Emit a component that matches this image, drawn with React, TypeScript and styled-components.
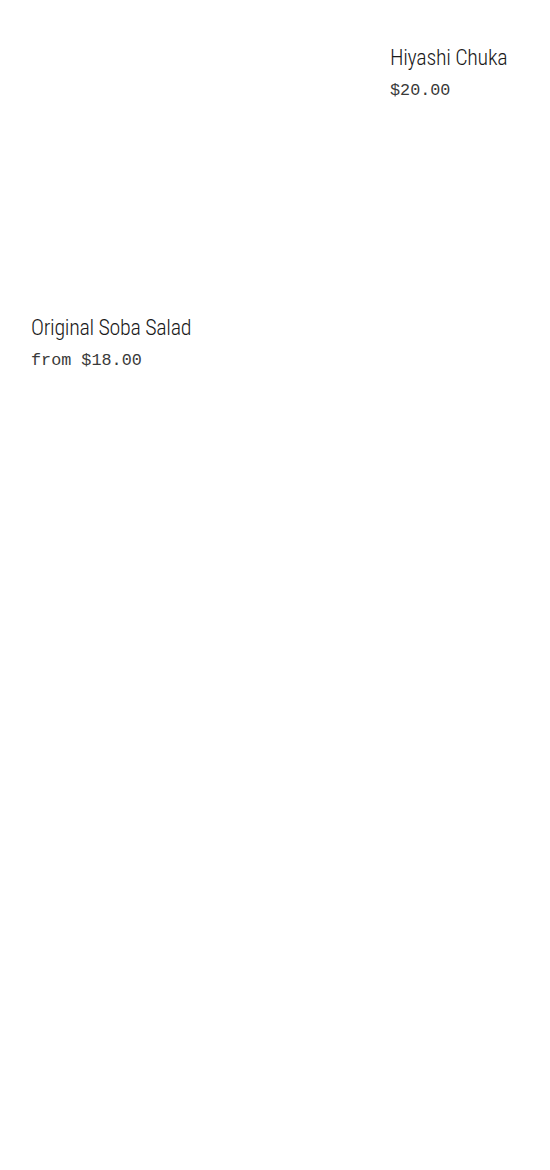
import React from 'react';
import styled, { createGlobalStyle } from 'styled-components';

const GlobalStyle = createGlobalStyle`
  html, body {
    margin: 0;
    padding: 0;
    background: #ffffff;
  }
  body {
    font-family: "Roboto Condensed", Roboto, sans-serif;
    color: #111111;
  }
`;

const Page = styled.main`
  width: 550px;
  min-height: 1170px;
  padding: 42px 0 0 0;
  box-sizing: border-box;
  display: flex;
  flex-direction: column;
  gap: 210px;
`;

const Card = styled.article<{ $side: 'left' | 'right' }>`
  display: flex;
  flex-direction: column;
  gap: 6px;
  align-self: ${(p) => (p.$side === 'right' ? 'flex-end' : 'flex-start')};
  width: ${(p) => (p.$side === 'right' ? '160px' : '240px')};
  padding-left: ${(p) => (p.$side === 'right' ? '0' : '31px')};
  box-sizing: border-box;
`;

const Title = styled.h3`
  margin: 0;
  font-family: "Roboto Condensed", Roboto, sans-serif;
  font-weight: 300;
  font-size: 22px;
  letter-spacing: -0.3px;
  line-height: 32px;
  color: #1a1a1a;
  white-space: nowrap;
`;

const Price = styled.p`
  margin: 0;
  font-family: "Liberation Mono", "DejaVu Sans Mono", monospace;
  font-size: 16.8px;
  line-height: 22px;
  color: #3a3a3a;
  white-space: nowrap;
`;

const items = [
  { name: 'Hiyashi Chuka', price: '$20.00', side: 'right' as const },
  { name: 'Original Soba Salad', price: 'from $18.00', side: 'left' as const },
];

const App: React.FC = () => {
  return (
    <>
      <GlobalStyle />
      <Page>
        {items.map((item) => (
          <Card key={item.name} $side={item.side}>
            <Title>{item.name}</Title>
            <Price>{item.price}</Price>
          </Card>
        ))}
      </Page>
    </>
  );
};

export default App;
